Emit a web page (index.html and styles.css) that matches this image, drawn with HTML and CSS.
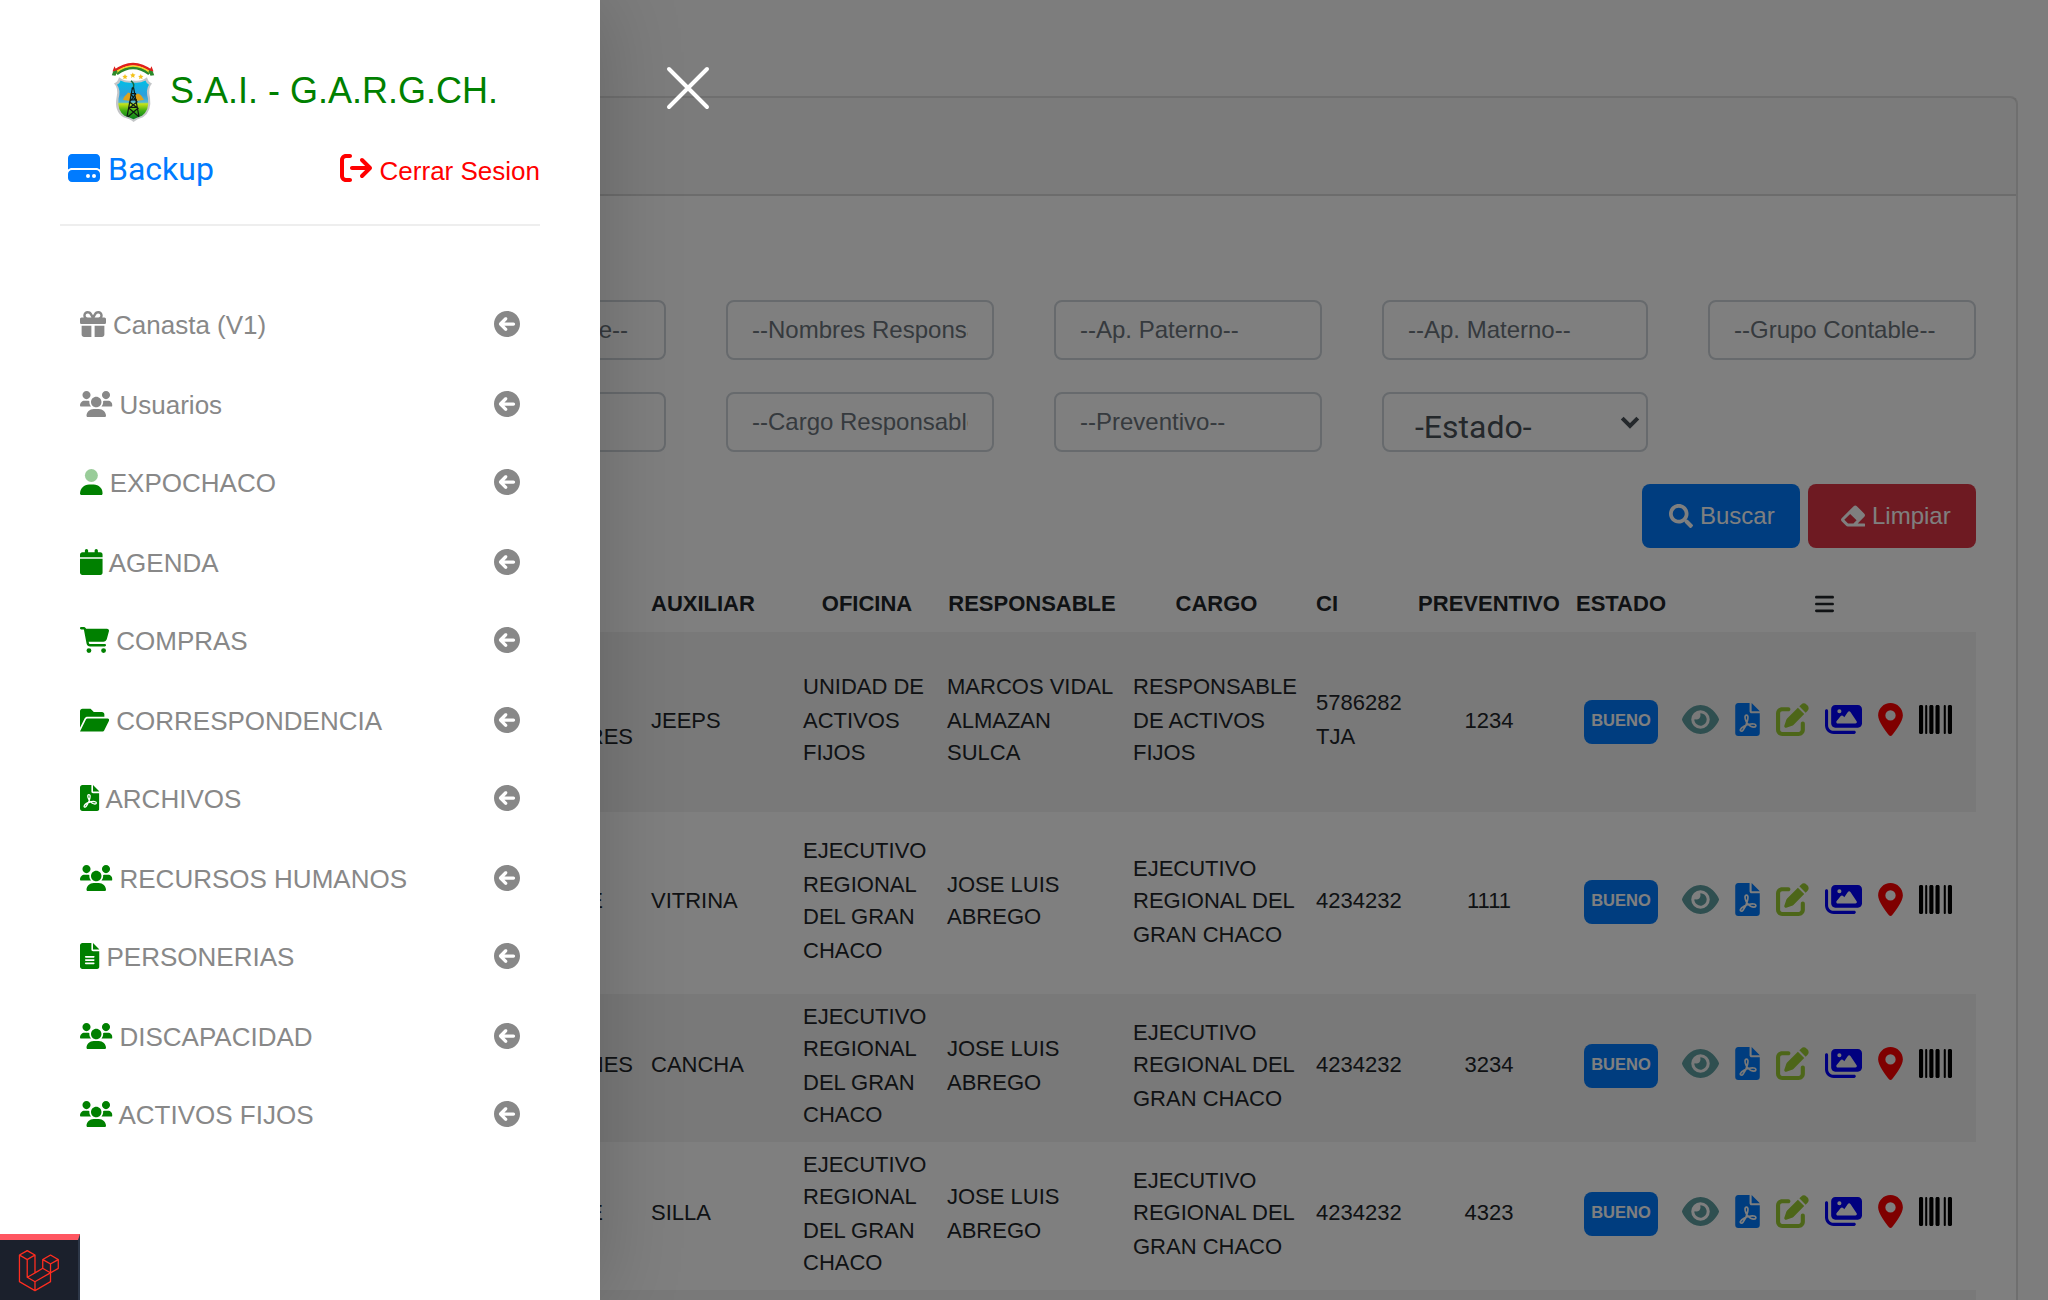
FILE: index.html
```html
<!DOCTYPE html>
<html lang="es">
<head>
<meta charset="utf-8">
<title>S.A.I. - G.A.R.G.CH.</title>
<link rel="stylesheet" href="styles.css">
</head>
<body>
<svg class="sprite" aria-hidden="true">
  <symbol id="i-drive" viewBox="0 0 512 512"><path d="M0 96C0 60.7 28.7 32 64 32H448c35.3 0 64 28.7 64 64V280.400c-17-15.200-39.400-24.400-64-24.400H64c-24.600 0-47 9.200-64 24.400V96zM64 288H448c35.300 0 64 28.700 64 64v64c0 35.300-28.700 64-64 64H64c-35.300 0-64-28.700-64-64V352c0-35.300 28.700-64 64-64zM320 416a32 32 0 1 0 0-64 32 32 0 1 0 0 64zm128-32a32 32 0 1 0 -64 0 32 32 0 1 0 64 0z"/></symbol>
  <symbol id="i-exit" viewBox="0 0 512 512"><path d="M502.6 278.6c12.5-12.5 12.5-32.8 0-45.3l-128-128c-12.5-12.5-32.8-12.5-45.3 0s-12.500 32.800 0 45.300L402.700 224 192 224c-17.700 0-32 14.300-32 32s14.300 32 32 32l210.700 0-73.400 73.400c-12.500 12.500-12.500 32.800 0 45.300s32.800 12.500 45.300 0l128-128zM160 96c17.700 0 32-14.300 32-32s-14.300-32-32-32L96 32C43 32 0 75 0 128L0 384c0 53 43 96 96 96l64 0c17.700 0 32-14.300 32-32s-14.300-32-32-32l-64 0c-17.700 0-32-14.300-32-32l0-256c0-17.700 14.300-32 32-32l64 0z"/></symbol>
  <symbol id="i-gift" viewBox="0 0 512 512"><path d="M190.5 68.8L225.3 128H224 152c-22.1 0-40-17.9-40-40s17.9-40 40-40h2.200c14.900 0 28.800 7.900 36.300 20.800zM64 88c0 14.400 3.500 28 9.600 40H32c-17.700 0-32 14.300-32 32v64c0 17.700 14.300 32 32 32H480c17.700 0 32-14.300 32-32V160c0-17.700-14.300-32-32-32H438.400c6.100-12 9.600-25.600 9.600-40c0-48.600-39.400-88-88-88h-2.200c-31.900 0-61.500 16.900-77.700 44.400L256 85.500l-24.100-41C215.700 16.900 186.100 0 154.200 0H152C103.400 0 64 39.400 64 88zm336 0c0 22.100-17.900 40-40 40H288h-1.300l34.800-59.200C329.100 55.900 342.900 48 357.800 48H360c22.100 0 40 17.900 40 40zM32 288V464c0 26.500 21.500 48 48 48H224V288H32zM288 512H432c26.500 0 48-21.500 48-48V288H288V512z"/></symbol>
  <symbol id="i-users" viewBox="0 0 640 512"><path d="M319.9 320c57.41 0 103.100-46.560 103.100-104c0-57.440-46.540-104-103.100-104c-57.410 0-103.100 46.560-103.100 104C215.900 273.400 262.500 320 319.900 320zM369.900 352H270.100C191.600 352 128 411.700 128 485.300C128 500.100 140.700 512 156.400 512h327.200C499.300 512 512 500.100 512 485.300C512 411.700 448.400 352 369.900 352zM512 160c44.180 0 80-35.820 80-80S556.200 0 512 0c-44.180 0-80 35.820-80 80S467.800 160 512 160zM183.900 216c0-5.449 .9824-10.630 1.609-15.910C174.600 194.100 162.600 192 149.900 192H88.080C39.440 192 0 233.800 0 285.300C0 295.600 7.887 304 17.620 304h199.500C196.700 280.200 183.900 249.700 183.900 216zM128 160c44.180 0 80-35.820 80-80S172.200 0 128 0C83.820 0 48 35.820 48 80S83.820 160 128 160zM551.900 192h-61.840c-12.800 0-24.880 3.037-35.860 8.240C454.800 205.500 455.800 210.600 455.800 216c0 33.710-12.780 64.210-33.160 88h199.700C632.100 304 640 295.600 640 285.300C640 233.800 600.600 192 551.900 192z"/></symbol>
  <symbol id="i-user" viewBox="0 0 448 512"><path opacity=".4" d="M224 256A128 128 0 1 0 224 0a128 128 0 1 0 0 256z"/><path d="M178.300 304C79.800 304 0 383.800 0 482.300C0 498.700 13.300 512 29.700 512H418.300c16.400 0 29.700-13.300 29.700-29.700C448 383.800 368.200 304 269.700 304H178.300z"/></symbol>
  <symbol id="i-calendar" viewBox="0 0 448 512"><path d="M96 32C96 14.33 110.3 0 128 0C145.7 0 160 14.33 160 32V64H288V32C288 14.33 302.3 0 320 0C337.7 0 352 14.33 352 32V64H400C426.5 64 448 85.49 448 112V160H0V112C0 85.49 21.49 64 48 64H96V32zM448 464C448 490.5 426.5 512 400 512H48C21.49 512 0 490.5 0 464V192H448V464z"/></symbol>
  <symbol id="i-cart" viewBox="0 0 576 512"><path d="M0 24C0 10.7 10.7 0 24 0H69.5c22 0 41.5 12.8 50.6 32h411c26.300 0 45.500 25 38.600 50.400l-41 152.300c-8.500 31.400-37 53.300-69.500 53.300H170.700l5.400 28.500c2.200 11.300 12.100 19.500 23.600 19.500H488c13.300 0 24 10.700 24 24s-10.700 24-24 24H199.700c-34.600 0-64.300-24.600-70.700-58.500L77.400 54.500c-.7-3.800-4-6.500-7.900-6.500H24C10.700 48 0 37.300 0 24zM128 464a48 48 0 1 1 96 0 48 48 0 1 1 -96 0zm336-48a48 48 0 1 1 0 96 48 48 0 1 1 0-96z"/></symbol>
  <symbol id="i-folder" viewBox="0 0 576 512"><path d="M147.8 192H480V144C480 117.5 458.5 96 432 96h-160l-64-64h-160C21.49 32 0 53.49 0 80v328.400l90.540-181.100C101.400 205.600 123.400 192 147.800 192zM543.100 224H147.800C135.700 224 124.600 230.800 119.200 241.700L0 480h447.100c12.120 0 23.200-6.852 28.620-17.690l96-192C583.200 249 567.700 224 543.100 224z"/></symbol>
  <symbol id="i-pdf" viewBox="0 0 384 512">
    <mask id="pdf-cut"><rect width="384" height="512" fill="#fff"/><path d="M176 188c-24 0-26 26-18 60c12 46 42 90 82 112c32 16 80 22 82-6c2-32-54-34-102-24c-50 10-122 46-138 82c-8 24 22 34 40 10c26-34 62-110 72-158c8-40 10-76-18-76z" fill="none" stroke="#000" stroke-width="26" stroke-linejoin="round"/></mask>
    <path mask="url(#pdf-cut)" d="M256 0v128h128L256 0zM224 128L224 0H48C21.490 0 0 21.490 0 48v416C0 490.500 21.490 512 48 512h288c26.510 0 48-21.490 48-48V160h-127.100C238.300 160 224 145.700 224 128z"/></symbol>
  <symbol id="i-file" viewBox="0 0 384 512"><path fill-rule="evenodd" d="M256 0v128h128L256 0zM224 128L224 0H48C21.490 0 0 21.490 0 48v416C0 490.500 21.490 512 48 512h288c26.510 0 48-21.490 48-48V160h-127.100C238.300 160 224 145.700 224 128zM272 416h-160C103.200 416 96 408.800 96 400C96 391.200 103.200 384 112 384h160c8.836 0 16 7.162 16 16C288 408.800 280.800 416 272 416zM272 352h-160C103.200 352 96 344.800 96 336C96 327.200 103.200 320 112 320h160c8.836 0 16 7.162 16 16C288 344.800 280.800 352 272 352zM288 272C288 280.800 280.800 288 272 288h-160C103.200 288 96 280.800 96 272C96 263.200 103.200 256 112 256h160C280.800 256 288 263.200 288 272z"/></symbol>
  <symbol id="i-back" viewBox="0 0 512 512"><path fill-rule="evenodd" d="M256 0C114.600 0 0 114.600 0 256s114.600 256 256 256s256-114.600 256-256S397.400 0 256 0zM384 288H205.300l49.380 49.380c12.500 12.500 12.500 32.750 0 45.250s-32.750 12.500-45.250 0L105.400 278.600C97.400 270.700 96 260.900 96 256c0-4.883 1.391-14.660 9.398-22.650l103.100-103.100c12.500-12.500 32.750-12.500 45.250 0s12.500 32.750 0 45.250L205.300 224H384c17.690 0 32 14.330 32 32S401.700 288 384 288z"/></symbol>
  <symbol id="i-search" viewBox="0 0 512 512"><path d="M505 442.700L405.300 343c-4.500-4.500-10.600-7-17-7H372c27.600-35.300 44-79.700 44-128C416 93.100 322.900 0 208 0S0 93.100 0 208s93.100 208 208 208c48.300 0 92.700-16.400 128-44v16.300c0 6.400 2.500 12.500 7 17l99.700 99.700c9.400 9.400 24.600 9.400 33.900 0l28.300-28.300c9.400-9.400 9.400-24.600.1-34zM208 336c-70.700 0-128-57.200-128-128 0-70.700 57.200-128 128-128 70.700 0 128 57.200 128 128 0 70.700-57.200 128-128 128z"/></symbol>
  <symbol id="i-eraser" viewBox="0 0 512 512"><path d="M497.941 273.941c18.745-18.745 18.745-49.137 0-67.882l-160-160c-18.745-18.745-49.136-18.746-67.883 0l-256 256c-18.745 18.745-18.745 49.137 0 67.882l96 96A48.004 48.004 0 0 0 144 480h356c6.627 0 12-5.373 12-12v-40c0-6.627-5.373-12-12-12H355.883l142.058-142.059zm-302.627-62.627l137.373 137.373L265.373 416H150.628l-80-80 124.686-124.686z"/></symbol>
  <symbol id="i-bars" viewBox="0 0 448 512"><path d="M0 96C0 78.300 14.300 64 32 64H416c17.700 0 32 14.300 32 32s-14.300 32-32 32H32C14.300 128 0 113.700 0 96zM0 256c0-17.700 14.300-32 32-32H416c17.700 0 32 14.300 32 32s-14.300 32-32 32H32c-17.700 0-32-14.300-32-32zM448 416c0 17.700-14.300 32-32 32H32c-17.700 0-32-14.300-32-32s14.300-32 32-32H416c17.700 0 32 14.300 32 32z"/></symbol>
  <symbol id="i-eye" viewBox="0 0 576 512"><path d="M288 32c-80.800 0-145.500 36.800-192.600 80.600C48.600 156 17.300 208 2.500 243.700c-3.300 7.900-3.300 16.700 0 24.600C17.300 304 48.600 356 95.400 399.400C142.500 443.200 207.200 480 288 480s145.500-36.800 192.600-80.600c46.800-43.500 78.100-95.400 93-131.100c3.300-7.900 3.300-16.700 0-24.600c-14.900-35.700-46.200-87.700-93-131.100C433.500 68.800 368.800 32 288 32zM144 256a144 144 0 1 1 288 0 144 144 0 1 1 -288 0zm144-64c0 35.300-28.700 64-64 64c-7.100 0-13.900-1.200-20.300-3.300c-5.500-1.800-11.900 1.600-11.700 7.400c.3 6.900 1.300 13.800 3.200 20.700c13.700 51.200 66.400 81.600 117.600 67.900s81.600-66.400 67.900-117.600c-11.100-41.500-47.800-69.400-88.600-71.100c-5.800-.2-9.200 6.100-7.400 11.700c2.100 6.400 3.300 13.200 3.300 20.300z"/></symbol>
  <symbol id="i-edit" viewBox="0 0 512 512"><path d="M490.300 40.400C512.200 62.270 512.200 97.730 490.300 119.600L460.300 149.700L362.300 51.720L392.400 21.660C414.300-.2135 449.700-.2135 471.600 21.660L490.300 40.400zM172.400 241.700L339.700 74.340L437.700 172.300L270.300 339.600C264.200 345.800 256.700 350.400 248.400 353.200L159.600 382.800C150.100 385.600 141.500 383.400 135 376.100C128.600 370.500 126.400 361 129.200 352.400L158.800 263.600C161.600 255.300 166.200 247.800 172.400 241.700zM192 64C209.700 64 224 78.330 224 96C224 113.700 209.700 128 192 128H96C78.330 128 64 142.300 64 160V416C64 433.700 78.330 448 96 448H352C369.700 448 384 433.700 384 416V320C384 302.300 398.300 288 416 288C433.700 288 448 302.300 448 320V416C448 469 405 512 352 512H96C42.980 512 0 469 0 416V160C0 107 42.980 64 96 64H192z"/></symbol>
  <symbol id="i-images" viewBox="0 0 576 512"><path d="M160 32c-35.300 0-64 28.700-64 64V320c0 35.300 28.700 64 64 64H512c35.300 0 64-28.700 64-64V96c0-35.300-28.700-64-64-64H160zM396 138.700l96 144c4.900 7.400 5.400 16.800 1.200 24.600S480.900 320 472 320H328 280 200c-9.200 0-17.600-5.300-21.600-13.600s-2.900-18.200 2.900-25.400l64-80c4.600-5.700 11.400-9 18.700-9s14.200 3.300 18.700 9l17.300 21.600 56-84C360.500 132 368 128 376 128s15.500 4 20 10.700zM192 128a32 32 0 1 1 64 0 32 32 0 1 1 -64 0zM48 120c0-13.300-10.700-24-24-24S0 106.700 0 120V344c0 75.100 60.900 136 136 136H456c13.300 0 24-10.700 24-24s-10.700-24-24-24H136c-48.600 0-88-39.400-88-88V120z"/></symbol>
  <symbol id="i-pin" viewBox="0 0 384 512"><path d="M215.700 499.200C267 435 384 279.400 384 192C384 86 298 0 192 0S0 86 0 192c0 87.400 117 243 168.300 307.200c12.300 15.300 35.100 15.300 47.400 0zM192 112a80 80 0 1 1 0 160 80 80 0 1 1 0-160z"/></symbol>
  <symbol id="i-barcode" viewBox="0 0 512 512"><path d="M24 32C10.700 32 0 42.700 0 56V456c0 13.300 10.700 24 24 24H40c13.300 0 24-10.700 24-24V56c0-13.300-10.700-24-24-24H24zm88 0c-8.800 0-16 7.200-16 16V464c0 8.800 7.200 16 16 16s16-7.200 16-16V48c0-8.800-7.200-16-16-16zm72 0c-13.300 0-24 10.700-24 24V456c0 13.300 10.700 24 24 24h16c13.300 0 24-10.700 24-24V56c0-13.300-10.700-24-24-24H184zm96 0c-13.300 0-24 10.700-24 24V456c0 13.300 10.700 24 24 24h16c13.300 0 24-10.700 24-24V56c0-13.300-10.700-24-24-24H280zM448 56V456c0 13.300 10.700 24 24 24h16c13.300 0 24-10.700 24-24V56c0-13.300-10.700-24-24-24H472c-13.300 0-24 10.700-24 24zm-64-8V464c0 8.800 7.200 16 16 16s16-7.200 16-16V48c0-8.800-7.200-16-16-16s-16 7.200-16 16z"/></symbol>
</svg>

<main class="page">
  <section class="card">
    <header class="card-header"></header>
    <div class="card-body">
      <form class="filters">
        <div class="field"></div>
        <div class="field field-end">--Responsable--</div>
        <div class="field">--Nombres Responsable--</div>
        <div class="field">--Ap. Paterno--</div>
        <div class="field">--Ap. Materno--</div>
        <div class="field">--Grupo Contable--</div>
        <div class="field"></div>
        <div class="field"></div>
        <div class="field">--Cargo Responsable--</div>
        <div class="field">--Preventivo--</div>
        <div class="field select"><span>-Estado-</span><svg class="chevron" viewBox="0 0 20 13"><path d="M2.200 2.200L10 10l7.800-7.800" fill="none" stroke="currentColor" stroke-width="4"/></svg></div>
      </form>
      <div class="buttons">
        <button class="btn btn-primary" type="button"><svg><use href="#i-search"/></svg>Buscar</button>
        <button class="btn btn-danger" type="button"><svg><use href="#i-eraser"/></svg>Limpiar</button>
      </div>
      <table class="assets">
        <colgroup><col class="c-group"><col class="c-aux"><col class="c-ofi"><col class="c-resp"><col class="c-cargo"><col class="c-ci"><col class="c-prev"><col class="c-est"><col class="c-act"></colgroup>
        <thead>
          <tr><th></th><th class="left aux">AUXILIAR</th><th>OFICINA</th><th>RESPONSABLE</th><th>CARGO</th><th class="left">CI</th><th class="prev">PREVENTIVO</th><th class="est">ESTADO</th><th><svg class="bars"><use href="#i-bars"/></svg></th></tr>
        </thead>
        <tbody>
          <tr class="row-1">
            <td class="group a"><span>VEHICULOS</span><span>AUTOMOTORES</span></td><td class="aux">JEEPS</td>
            <td class="a"><span>UNIDAD DE</span><span>ACTIVOS</span><span>FIJOS</span></td>
            <td class="a"><span>MARCOS VIDAL</span><span>ALMAZAN</span><span>SULCA</span></td>
            <td class="a"><span>RESPONSABLE</span><span>DE ACTIVOS</span><span>FIJOS</span></td>
            <td class="a"><span>5786282</span><span>TJA</span></td><td class="center prev">1234</td>
            <td class="state"><b class="badge">BUENO</b></td>
            <td class="icons"><div class="actions"><svg class="w-wide eye"><use href="#i-eye"/></svg><svg class="w-thin pdf"><use href="#i-pdf"/></svg><svg class="edit"><use href="#i-edit"/></svg><svg class="w-wide images"><use href="#i-images"/></svg><svg class="w-thin pin"><use href="#i-pin"/></svg><svg class="barcode"><use href="#i-barcode"/></svg></div></td>
          </tr>
          <tr class="row-2">
            <td class="group short">MUEBLE</td><td class="aux">VITRINA</td>
            <td class="a"><span>EJECUTIVO</span><span>REGIONAL</span><span>DEL GRAN</span><span>CHACO</span></td>
            <td class="b"><span>JOSE LUIS</span><span>ABREGO</span></td>
            <td class="b cargo"><span>EJECUTIVO</span><span>REGIONAL DEL</span><span>GRAN CHACO</span></td>
            <td>4234232</td><td class="center prev">1111</td>
            <td class="state"><b class="badge">BUENO</b></td>
            <td class="icons"><div class="actions"><svg class="w-wide eye"><use href="#i-eye"/></svg><svg class="w-thin pdf"><use href="#i-pdf"/></svg><svg class="edit"><use href="#i-edit"/></svg><svg class="w-wide images"><use href="#i-images"/></svg><svg class="w-thin pin"><use href="#i-pin"/></svg><svg class="barcode"><use href="#i-barcode"/></svg></div></td>
          </tr>
          <tr class="row-3">
            <td class="group">EDIFICACIONES</td><td class="aux">CANCHA</td>
            <td class="b"><span>EJECUTIVO</span><span>REGIONAL</span><span>DEL GRAN</span><span>CHACO</span></td>
            <td class="a"><span>JOSE LUIS</span><span>ABREGO</span></td>
            <td class="b cargo"><span>EJECUTIVO</span><span>REGIONAL DEL</span><span>GRAN CHACO</span></td>
            <td>4234232</td><td class="center prev">3234</td>
            <td class="state"><b class="badge">BUENO</b></td>
            <td class="icons"><div class="actions"><svg class="w-wide eye"><use href="#i-eye"/></svg><svg class="w-thin pdf"><use href="#i-pdf"/></svg><svg class="edit"><use href="#i-edit"/></svg><svg class="w-wide images"><use href="#i-images"/></svg><svg class="w-thin pin"><use href="#i-pin"/></svg><svg class="barcode"><use href="#i-barcode"/></svg></div></td>
          </tr>
          <tr class="row-4">
            <td class="group short">MUEBLE</td><td class="aux">SILLA</td>
            <td class="b"><span>EJECUTIVO</span><span>REGIONAL</span><span>DEL GRAN</span><span>CHACO</span></td>
            <td class="a"><span>JOSE LUIS</span><span>ABREGO</span></td>
            <td class="b cargo"><span>EJECUTIVO</span><span>REGIONAL DEL</span><span>GRAN CHACO</span></td>
            <td>4234232</td><td class="center prev">4323</td>
            <td class="state"><b class="badge">BUENO</b></td>
            <td class="icons"><div class="actions"><svg class="w-wide eye"><use href="#i-eye"/></svg><svg class="w-thin pdf"><use href="#i-pdf"/></svg><svg class="edit"><use href="#i-edit"/></svg><svg class="w-wide images"><use href="#i-images"/></svg><svg class="w-thin pin"><use href="#i-pin"/></svg><svg class="barcode"><use href="#i-barcode"/></svg></div></td>
          </tr>
          <tr class="row-5"><td colspan="9"></td></tr>
        </tbody>
      </table>
    </div>
  </section>
</main>

<div class="backdrop"></div>

<aside class="sidebar">
  <div class="brand">
    <svg class="crest" viewBox="0 2 44 57" preserveAspectRatio="none">
      <defs>
        <linearGradient id="sky" x1="0" y1="0" x2="0" y2="1"><stop offset="0" stop-color="#00bfe6"/><stop offset=".38" stop-color="#2f9fdc"/><stop offset=".56" stop-color="#55b8d0"/><stop offset=".6" stop-color="#c8e418"/><stop offset=".78" stop-color="#3fae14"/><stop offset="1" stop-color="#067a1c"/></linearGradient>
      </defs>
      <path d="M3 11Q22-3 41 11" fill="none" stroke="#e01f1c" stroke-width="2.600"/>
      <path d="M3.500 13.200Q22-.8 40.500 13.200" fill="none" stroke="#f6d52a" stroke-width="2.400"/>
      <path d="M6 13.500Q22 2 38 13.500" fill="none" stroke="#2b8a2b" stroke-width="2.200"/>
      <path d="M.8 14.500L3.500 7.500l3 3.200-2 4.300z" fill="#2b8a2b"/><path d="M1.500 11L3.500 6l2 4z" fill="#e01f1c"/>
      <path d="M43.200 14.500L40.500 7.500l-3 3.200 2 4.300z" fill="#2b8a2b"/><path d="M42.500 11L40.500 6l-2 4z" fill="#e01f1c"/>
      <g fill="#f3c21a"><path d="M14 13.300l.8 1.700 1.900.2-1.400 1.300.4 1.900-1.700-1-1.700 1 .4-1.900-1.400-1.300 1.900-.2z"/><path d="M21.800 12l.8 1.700 1.900.2-1.400 1.300.4 1.900-1.700-1-1.700 1 .4-1.900-1.400-1.300 1.900-.2z"/><path d="M29.800 13.300l.8 1.700 1.900.2-1.400 1.300.4 1.900-1.700-1-1.700 1 .4-1.900-1.400-1.300 1.900-.2z"/></g>
      <path d="M8 16.500Q14 21 22 19.500Q30 21 36 16.500Q37 21 41 22.500Q36.500 27 39 36Q41 49 32 54.500Q26 56 22.500 59Q19 56 12.500 54.500Q3 49 5.500 36Q8 27 3 22.500Q7 21 8 16.500z" fill="#c4c6c8"/>
      <path d="M9.500 19.500Q15 22.500 22 21.500Q29 22.500 34.500 19.500Q35.500 22.500 38 23.500Q34.500 28 37 37Q38.500 48 31 53Q26 54.500 22.500 56.500Q19 54.500 13.500 53Q6 48 7.500 37Q10 28 6 23.500Q9 22.500 9.500 19.500z" fill="url(#sky)"/>
      <path d="M12 38c1-4 4-5 5-7l3 1v7zM33 38c-2-3-3-5-6-6l-3 1v6z" fill="#e0a21b"/>
      <path d="M20 20c3 2 4 5 1 8" fill="none" stroke="#14683a" stroke-width="1.500"/>
      <path d="M21.500 26L16 54M22.500 26L28 54M20 32h5M19 38h7M17.500 45h9M19.500 32l6.500 8-8 6 10 8M25 32l-6.500 8 8.500 6-10 8" fill="none" stroke="#0e1a12" stroke-width="1.200"/>
    </svg>
    <span>S.A.I. - G.A.R.G.CH.</span>
  </div>
  <div class="tools">
    <a class="backup"><svg><use href="#i-drive"/></svg>Backup</a>
    <a class="logout"><svg><use href="#i-exit"/></svg>Cerrar Sesion</a>
  </div>
  <hr>
  <ul class="menu">
    <li><svg class="gray"><use href="#i-gift"/></svg><span>Canasta (V1)</span><svg class="back"><use href="#i-back"/></svg></li>
    <li><svg class="gray m-640"><use href="#i-users"/></svg><span>Usuarios</span><svg class="back"><use href="#i-back"/></svg></li>
    <li><svg class="m-448"><use href="#i-user"/></svg><span>EXPOCHACO</span><svg class="back"><use href="#i-back"/></svg></li>
    <li><svg class="m-448"><use href="#i-calendar"/></svg><span class="tight">AGENDA</span><svg class="back"><use href="#i-back"/></svg></li>
    <li><svg class="m-576"><use href="#i-cart"/></svg><span>COMPRAS</span><svg class="back"><use href="#i-back"/></svg></li>
    <li><svg class="m-576"><use href="#i-folder"/></svg><span>CORRESPONDENCIA</span><svg class="back"><use href="#i-back"/></svg></li>
    <li><svg class="m-384"><use href="#i-pdf"/></svg><span class="tight">ARCHIVOS</span><svg class="back"><use href="#i-back"/></svg></li>
    <li><svg class="m-640"><use href="#i-users"/></svg><span>RECURSOS HUMANOS</span><svg class="back"><use href="#i-back"/></svg></li>
    <li><svg class="m-384"><use href="#i-file"/></svg><span>PERSONERIAS</span><svg class="back"><use href="#i-back"/></svg></li>
    <li><svg class="m-640"><use href="#i-users"/></svg><span>DISCAPACIDAD</span><svg class="back"><use href="#i-back"/></svg></li>
    <li><svg class="m-640"><use href="#i-users"/></svg><span class="tight">ACTIVOS FIJOS</span><svg class="back"><use href="#i-back"/></svg></li>
  </ul>
</aside>

<svg class="close" viewBox="0 0 44 44"><path d="M3 3l38 38M41 3L3 41" stroke="#fff" stroke-width="4" stroke-linecap="round"/></svg>

<div class="debugbar">
  <svg viewBox="0 0 50 52"><path fill="#ff2d20" d="M49.626 11.564a.809.809 0 0 1 .028.209v10.972a.8.8 0 0 1-.402.694l-9.209 5.302V39.250c0 .286-.152.550-.4.694L20.420 51.010c-.044.025-.092.041-.140.058-.018.006-.035.017-.054.022a.805.805 0 0 1-.410 0c-.022-.006-.042-.018-.063-.026-.044-.016-.090-.030-.132-.054L.402 39.944A.801.801 0 0 1 0 39.250V6.334c0-.072.010-.142.028-.210.006-.023.020-.044.028-.067.015-.042.029-.085.051-.124.015-.026.037-.047.055-.071.023-.032.044-.065.071-.093.023-.023.053-.040.079-.060.029-.024.055-.050.088-.069h.001l9.610-5.533a.802.802 0 0 1 .8 0l9.610 5.533h.002c.032.020.059.045.088.068.026.020.055.038.078.060.028.029.048.062.072.094.017.024.040.045.054.071.023.040.036.082.052.124.008.023.022.044.028.068a.809.809 0 0 1 .028.209v20.559l8.008-4.611v-10.510c0-.070.010-.141.028-.208.007-.024.020-.045.028-.068.016-.042.030-.085.052-.124.015-.026.037-.047.054-.071.024-.032.044-.065.072-.093.023-.023.052-.040.078-.060.030-.024.056-.050.088-.069h.001l9.611-5.533a.801.801 0 0 1 .8 0l9.610 5.533c.034.020.060.045.090.068.025.020.054.038.077.060.028.029.048.062.072.094.018.024.040.045.054.071.023.039.036.082.052.124.009.023.022.044.028.068zm-1.574 10.718v-9.124l-3.363 1.936-4.646 2.675v9.124l8.010-4.611zm-9.610 16.505v-9.130l-4.570 2.610-13.050 7.448v9.216l17.620-10.144zM1.602 7.719v31.068L19.220 48.930v-9.214l-9.204-5.209-.003-.002-.004-.002c-.031-.018-.057-.044-.086-.066-.025-.020-.054-.036-.076-.058l-.002-.003c-.026-.025-.044-.056-.066-.084-.020-.027-.044-.050-.060-.078l-.001-.003c-.018-.030-.029-.066-.042-.100-.013-.030-.030-.058-.038-.090v-.001c-.010-.038-.012-.078-.016-.117-.004-.030-.012-.060-.012-.090v-21.483L4.965 9.654 1.602 7.720zm8.810-5.994L2.405 6.334l8.005 4.609 8.006-4.610-8.006-4.608zm4.164 28.764l4.645-2.674V7.719l-3.363 1.936-4.646 2.675v20.096l3.364-1.937zM39.243 7.164l-8.006 4.609 8.006 4.609 8.005-4.610-8.005-4.608zm-.801 10.605l-4.646-2.675-3.363-1.936v9.124l4.645 2.674 3.364 1.937v-9.124zM20.020 38.330l11.743-6.704 5.870-3.350-8-4.606-9.211 5.303-8.395 4.833 7.993 4.524z"/></svg>
</div>
</body>
</html>
```
FILE: styles.css
```css
* { box-sizing: border-box; }

body {
  margin: 0;
  width: 2048px;
  height: 1300px;
  overflow: hidden;
  position: relative;
  background: #fafafa;
  color: #212529;
  font-family: "Liberation Sans", Arial, sans-serif;
  font-size: 22px;
}

svg { display: block; fill: currentColor; }
.sprite { position: absolute; width: 0; height: 0; }

.page { height: 1300px; padding: 96px 30px 0; }

.card {
  height: 1204px;
  background: #fff;
  border: 2px solid rgba(0, 0, 0, .125);
  border-bottom: 0;
  border-radius: 8px 8px 0 0;
}
.card-header {
  height: 98px;
  background: rgba(0, 0, 0, .03);
  border-bottom: 2px solid rgba(0, 0, 0, .125);
}
.card-body { padding: 104px 40px 0; }

.filters {
  display: grid;
  grid-template-columns: 268px 266px 268px 268px 266px 268px;
  column-gap: 60px;
  row-gap: 32px;
}
.field {
  height: 60px;
  padding: 0 24px;
  border: 2px solid #ced4da;
  border-radius: 8px;
  background: #fff;
  background-clip: padding-box;
  color: #6c757d;
  font-size: 24px;
  line-height: 56px;
  white-space: nowrap;
  overflow: clip;
  overflow-clip-margin: content-box;
}
.field-end { display: flex; justify-content: flex-end; padding-right: 36px; }
.select {
  display: flex;
  justify-content: space-between;
  padding: 0 6px 0 31px;
  font-family: Roboto, sans-serif;
  font-size: 32px;
  line-height: 66px;
  color: #495057;
}
.chevron { width: 20px; height: 13px; margin-top: 22px; }

.buttons { display: flex; justify-content: flex-end; gap: 8px; margin-top: 32px; }
.btn {
  display: flex;
  align-items: center;
  gap: 7px;
  width: 158px;
  height: 64px;
  padding: 0 0 0 27px;
  border: 0;
  border-radius: 8px;
  color: #fff;
  font: 24px "Liberation Sans", Arial, sans-serif;
}
.btn svg { width: 24px; height: 24px; flex: none; }
.btn-primary { background: #007bff; }
.btn-danger { width: 168px; background: #dc3545; padding-left: 33px; }

.assets {
  table-layout: fixed;
  width: 1904px;
  margin-top: 28px;
  border-collapse: collapse;
}
.c-group { width: 572px; }
.c-aux { width: 151px; }
.c-ofi { width: 144px; }
.c-resp { width: 186px; }
.c-cargo { width: 183px; }
.c-ci { width: 101px; }
.c-prev { width: 159px; }
.c-est { width: 107px; }
.c-act { width: 301px; }

.assets th { height: 56px; padding: 0; line-height: 56px; white-space: nowrap; }
.assets th.left { text-align: left; padding-left: 8px; }
.assets th.aux { padding-left: 7px; }
.assets th.prev { padding-left: 1px; }
.assets th.est { padding-right: 1px; }
.bars { width: 19px; height: 22px; margin: 0 auto; transform: translateX(-1px); }

.assets td { padding: 0 0 4px 8px; line-height: 33px; vertical-align: middle; white-space: nowrap; }
.assets td.aux { padding-left: 7px; }
.assets td.center { text-align: center; padding-left: 1px; }
.assets td.group { text-align: right; padding-right: 11px; }
.assets td.short { padding-right: 41px; }
.assets td.group span:first-child { padding-right: 60px; }
.assets td.state { padding-left: 16px; text-align: center; }
.assets td.icons { padding-left: 7px; }
.assets td span { display: block; height: 33px; }
.assets td.a span:nth-child(odd):not(:last-child) { height: 34px; }
.assets td.a span:nth-child(even):not(:last-child) { height: 32px; }
.assets td.b span:nth-child(odd):not(:last-child) { height: 32px; }
.assets td.b span:nth-child(even):not(:last-child) { height: 34px; }

.row-1 { height: 180px; }
.row-2 { height: 182px; }
.row-3, .row-4 { height: 148px; }
.row-5 { height: 10px; }
.assets tbody tr:nth-child(odd) { background: rgba(0, 0, 0, .05); }
.assets .row-1 td { padding-bottom: 3px; }
.assets .row-1 td.a, .assets .row-1 td.icons { padding-bottom: 5px; }
.assets .row-1 td.state { padding-bottom: 4px; }
.assets .row-2 td { padding-bottom: 5px; }
.assets .row-2 td.cargo { padding-bottom: 3px; }
.assets .row-2 td.state { padding-bottom: 6px; }
.assets .row-2 td.icons { padding-bottom: 7px; }
.assets .row-3 td, .assets .row-4 td { padding-bottom: 7px; }
.assets .row-3 td.a, .assets .row-4 td.a,
.assets .row-3 td.b, .assets .row-4 td.b { padding-bottom: 5px; }
.assets .row-3 td.state, .assets .row-4 td.state { padding-bottom: 8px; }
.assets .row-3 td.icons, .assets .row-4 td.icons { padding-bottom: 9px; }
.assets .row-5 td { padding: 0; }

.badge {
  display: block;
  width: 74px;
  height: 44px;
  margin-top: 4px;
  border-radius: 8px;
  background: #007bff;
  color: #fff;
  font-size: 16.5px;
  line-height: 40px;
}
.actions { display: flex; gap: 16px; color: #000; }
.actions svg { width: 33px; height: 33px; flex: none; }
.actions .w-wide { width: 37px; }
.actions .w-thin { width: 25px; }
.actions .eye { color: #5f9ea0; }
.actions .pdf { color: #007bff; }
.actions .edit { color: #9acd32; }
.actions .images { color: #00f; }
.actions .pin { color: #f00; }

.backdrop { position: absolute; inset: 0; background: rgba(0, 0, 0, .5); }

.sidebar {
  position: absolute;
  inset: 0 auto 0 0;
  width: 600px;
  padding: 62px 60px 0;
  background: #fff;
  box-shadow: 0 0 80px rgba(0, 0, 0, .2);
}
.brand {
  display: flex;
  align-items: center;
  gap: 15px;
  padding-left: 51px;
  height: 60px;
  color: green;
  font-size: 36px;
}
.brand span { padding-bottom: 2px; }
.crest { width: 44px; height: 60px; }

.tools { display: flex; justify-content: space-between; height: 40px; margin-top: 28px; padding-left: 8px; }
.tools a { display: flex; }
.tools svg { width: 32px; height: 32px; margin-top: 2px; }
.backup { gap: 8px; color: #007bff; font: 32px/38px Roboto, sans-serif; }
.logout { gap: 8px; color: red; font-size: 26px; line-height: 43px; }
.sidebar hr { margin: 34px 0 0; border: 0; border-top: 2px solid #eee; }

.menu { list-style: none; margin: 58px 0 0; padding: 0 20px; color: #888; font-size: 26px; }
.menu li { display: flex; align-items: center; height: 80px; }
.menu li:nth-child(even) { height: 78px; padding-top: 2px; }
.menu svg { width: 26px; height: 26px; color: green; flex: none; }
.menu .m-384 { width: 19.5px; }
.menu .m-448 { width: 22.75px; }
.menu .m-576 { width: 29.25px; }
.menu .m-640 { width: 32.5px; }
.menu .gray, .menu .back { color: #888; }
.menu span { margin-left: 7px; padding-top: 2px; }
.menu .tight { margin-left: 6px; }
.menu .back { margin-left: auto; }

.close { position: absolute; left: 666px; top: 66px; width: 44px; height: 44px; }

.debugbar {
  position: absolute;
  left: 0;
  bottom: 0;
  width: 80px;
  height: 66px;
  padding: 10px 0 0 18px;
  background: #1b202c;
  border-top: 6px solid #ff5661;
  border-right: 2px solid #2d3748;
}
.debugbar svg { width: 42px; height: 42px; }
```
